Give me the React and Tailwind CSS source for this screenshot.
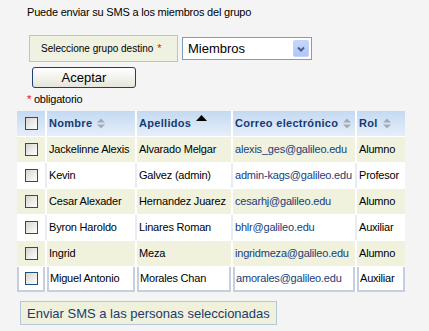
import React from "react";

const rows = [
  { n: "Jackelinne Alexis", a: "Alvarado Melgar", c: "alexis_ges@galileo.edu", r: "Alumno" },
  { n: "Kevin", a: "Galvez (admin)", c: "admin-kags@galileo.edu", r: "Profesor" },
  { n: "Cesar Alexader", a: "Hernandez Juarez", c: "cesarhj@galileo.edu", r: "Alumno" },
  { n: "Byron Haroldo", a: "Linares Roman", c: "bhlr@galileo.edu", r: "Auxiliar" },
  { n: "Ingrid", a: "Meza", c: "ingridmeza@galileo.edu", r: "Alumno" },
  { n: "Miguel Antonio", a: "Morales Chan", c: "amorales@galileo.edu", r: "Auxiliar" },
];

const Check = () => (
  <span className="block w-[13px] h-[13px] border border-[#1c5180] bg-gradient-to-br from-[#d6d6cf] to-white" />
);

const SortIcon = () => (
  <svg width="8" height="11" viewBox="0 0 8 11" className="ml-[5px] shrink-0">
    <path d="M0 4.5 L4 0.5 L8 4.5Z" fill="#a3abb6" />
    <path d="M0 6.5 L8 6.5 L4 10.5Z" fill="#a3abb6" />
  </svg>
);

const App = () => {
  return (
    <div className="w-[429px] h-[331px] bg-[#f4f4f4] font-['Liberation_Sans',Arial,sans-serif] text-[11px] tracking-[-0.2px] text-black overflow-hidden">
      {/* Intro */}
      <div className="pl-[27px] pt-[6px] leading-[13px]">Puede enviar su SMS a los miembros del grupo</div>

      {/* Group selector */}
      <div className="flex items-center gap-[4px] ml-[29px] mt-[16px]">
        <div className="w-[149px] h-[27px] border border-[#b5c6cd] bg-[#eff1e1] flex items-center pl-[11px] text-[10px] tracking-normal">
          Seleccione grupo destino <span className="text-[#ff0000] ml-[4px] text-[11px]">*</span>
        </div>
        <div className="w-[130px] h-[23px] border border-[#7f9db9] bg-white flex items-center justify-between pl-[5px] pr-[2px] tracking-normal">
          <span className="text-[13px] leading-none">Miembros</span>
          <span className="w-[16px] h-[17px] rounded-[2px] border border-[#c3d3fd] bg-gradient-to-b from-[#c6d6fc] to-[#b0c6f6] flex items-center justify-center">
            <svg width="8" height="6" viewBox="0 0 8 6">
              <path d="M1 1.5 L4 4.5 L7 1.5" stroke="#4d6185" strokeWidth="2" fill="none" />
            </svg>
          </span>
        </div>
      </div>

      {/* Accept button */}
      <button className="ml-[32px] mt-[5px] w-[104px] h-[21px] rounded-[3px] border border-[#1f3e72] bg-gradient-to-b from-white to-[#e6e5dc] text-[13px] tracking-normal leading-none flex items-center justify-center">
        Aceptar
      </button>

      <div className="pl-[27px] mt-[5px] leading-[13px]">
        <span className="text-[#ff0000]">*</span> obligatorio
      </div>

      {/* Table */}
      <div className="ml-[17px] mt-[5px] w-[388px] bg-white flex flex-col gap-px">
        <div className="flex gap-[2px] h-[25px] bg-white">
          <div className="w-[28px] flex items-center justify-center bg-gradient-to-b from-[#c4d9f1] to-[#e6effa]">
            <Check />
          </div>
          {[
            { t: "Nombre", w: "w-[88px]", s: "sort" },
            { t: "Apellidos", w: "w-[94px]", s: "asc" },
            { t: "Correo electrónico", w: "w-[122px]", s: "sort" },
            { t: "Rol", w: "w-[48px]", s: "sort" },
          ].map((h) => (
            <div
              key={h.t}
              className={`${h.w} flex items-center pl-[2px] font-bold tracking-[0.3px] text-[#153a73] whitespace-nowrap bg-gradient-to-b from-[#c4d9f1] to-[#e6effa]`}
            >
              {h.t}
              {h.s === "sort" ? (
                <SortIcon />
              ) : (
                <svg width="11" height="6" viewBox="0 0 11 6" className="ml-[5px] self-start mt-[4px]">
                  <path d="M0 6 L5.5 0 L11 6Z" fill="#000" />
                </svg>
              )}
            </div>
          ))}
        </div>

        {rows.map((row, i) => {
          const last = i === rows.length - 1;
          const odd = i % 2 === 0;
          const cell = last
            ? "bg-white border-2 border-t-0 border-[#c5cfdf] pl-[1px]"
            : odd
            ? "bg-[#f0f2dd] pl-[2px]"
            : "bg-white pl-[2px]";
          return (
            <div key={row.c} className={`flex gap-[2px] h-[25px] ${odd || last ? "bg-white" : "bg-[#e9edf2]"}`}>
              <div className={`w-[28px] flex items-center justify-center ${last ? "bg-white border-2 border-t-0 border-[#c5cfdf]" : odd ? "bg-[#f0f2dd]" : "bg-white"}`}>
                <Check />
              </div>
              <div className={`w-[88px] flex items-center whitespace-nowrap overflow-hidden ${cell}`}>{row.n}</div>
              <div className={`w-[94px] flex items-center whitespace-nowrap overflow-hidden ${cell}`}>{row.a}</div>
              <div className={`w-[122px] flex items-center whitespace-nowrap overflow-hidden text-[#1a3d7a] ${cell}`}>{row.c}</div>
              <div className={`w-[48px] flex items-center whitespace-nowrap overflow-hidden ${cell}`}>{row.r}</div>
            </div>
          );
        })}
      </div>

      {/* Send button */}
      <button className="ml-[20px] mt-[9px] w-[257px] h-[24px] border border-[#b8c6dc] bg-[#eff1dc] text-[#1c3a6e] text-[13px] tracking-normal leading-none flex items-center pl-[6px] whitespace-nowrap">
        Enviar SMS a las personas seleccionadas
      </button>
    </div>
  );
};

export default App;
